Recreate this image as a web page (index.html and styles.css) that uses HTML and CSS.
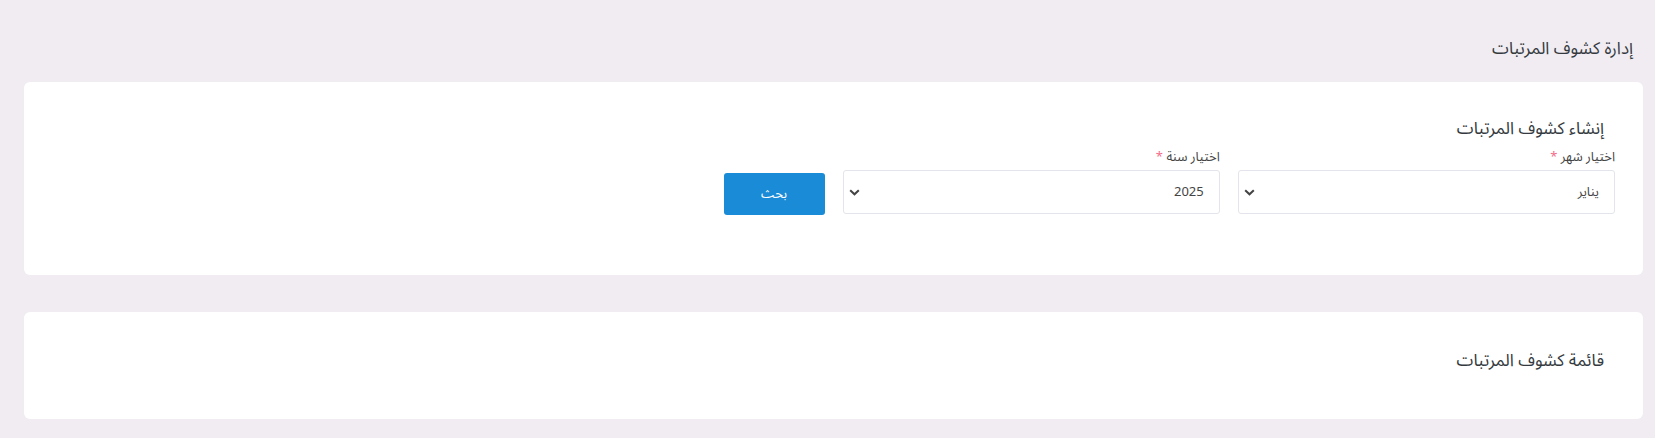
FILE: index.html
```html
<!DOCTYPE html>
<html lang="ar" dir="rtl">
<head>
  <meta charset="UTF-8">
  <title>إدارة كشوف المرتبات</title>
  <link rel="stylesheet" href="styles.css">
</head>
<body>

<div class="page">
  <h1 class="page-title">إدارة كشوف المرتبات</h1>

  <!-- إنشاء كشف جديد -->
  <div class="card card-create">
    <h2 class="card-title">إنشاء كشوف المرتبات</h2>
    <div class="form-row">
      <div class="field">
        <label>اختيار شهر <span class="req">*</span></label>
        <div class="select">
          <span>يناير</span>
          <svg width="11" height="7" viewBox="0 0 11 7"><path d="M1.2 1.2 5.5 5.3 9.8 1.2" fill="none" stroke="#444" stroke-width="2"/></svg>
        </div>
      </div>
      <div class="field">
        <label>اختيار سنة <span class="req">*</span></label>
        <div class="select">
          <span>2025</span>
          <svg width="11" height="7" viewBox="0 0 11 7"><path d="M1.2 1.2 5.5 5.3 9.8 1.2" fill="none" stroke="#444" stroke-width="2"/></svg>
        </div>
      </div>
      <div class="field field-btn">
        <button class="btn">بحث</button>
      </div>
    </div>
  </div>

  <!-- القائمة -->
  <div class="card card-list">
    <h2 class="card-title">قائمة كشوف المرتبات</h2>
  </div>
</div>

</body>
</html>
```

FILE: styles.css
```css
body {
  margin: 0;
  font-family: "Noto Sans Arabic", "Noto Sans", "DejaVu Sans", sans-serif;
  background-color: #f0ecf2;
  color: #343a40;
}
.page {
  padding: 37px 12px 19px 24px;
}
.page-title {
  margin: 0 0 21px;
  padding-right: 10px;
  font-size: 17px;
  line-height: 24px;
  font-weight: normal;
}
.card {
  background-color: white;
  border-radius: 6px;
}
.card-create {
  padding: 35px 28px 61px;
  margin-bottom: 37px;
}
.card-list {
  padding: 37px 28px 46px;
}
.card-title {
  margin: 0 0 7px;
  padding-right: 11px;
  font-size: 17px;
  line-height: 24px;
  font-weight: normal;
}
.card-list .card-title {
  margin: 0;
}
.form-row {
  display: grid;
  grid-template-columns: repeat(4, 1fr);
  gap: 18px;
  align-items: end;
}
.field label {
  display: block;
  font-size: 13px;
  line-height: 18px;
  margin-bottom: 4px;
  color: #444;
}
.req {
  color: #f26d8a;
}
.select {
  height: 42px;
  border: 1px solid #e4e4ec;
  border-radius: 3px;
  display: flex;
  align-items: center;
  justify-content: space-between;
  padding: 0 15px 0 5px;
  font-size: 13px;
  color: #444;
}
.select svg {
  display: block;
}
.field-btn {
  display: flex;
}
.btn {
  width: 101px;
  height: 42px;
  margin-bottom: -1px;
  background-color: #1a8bd6;
  color: white;
  border: none;
  border-radius: 3px;
  font-family: inherit;
  font-size: 13px;
  cursor: pointer;
}
.btn:hover {
  background-color: #1479bd;
}
```
